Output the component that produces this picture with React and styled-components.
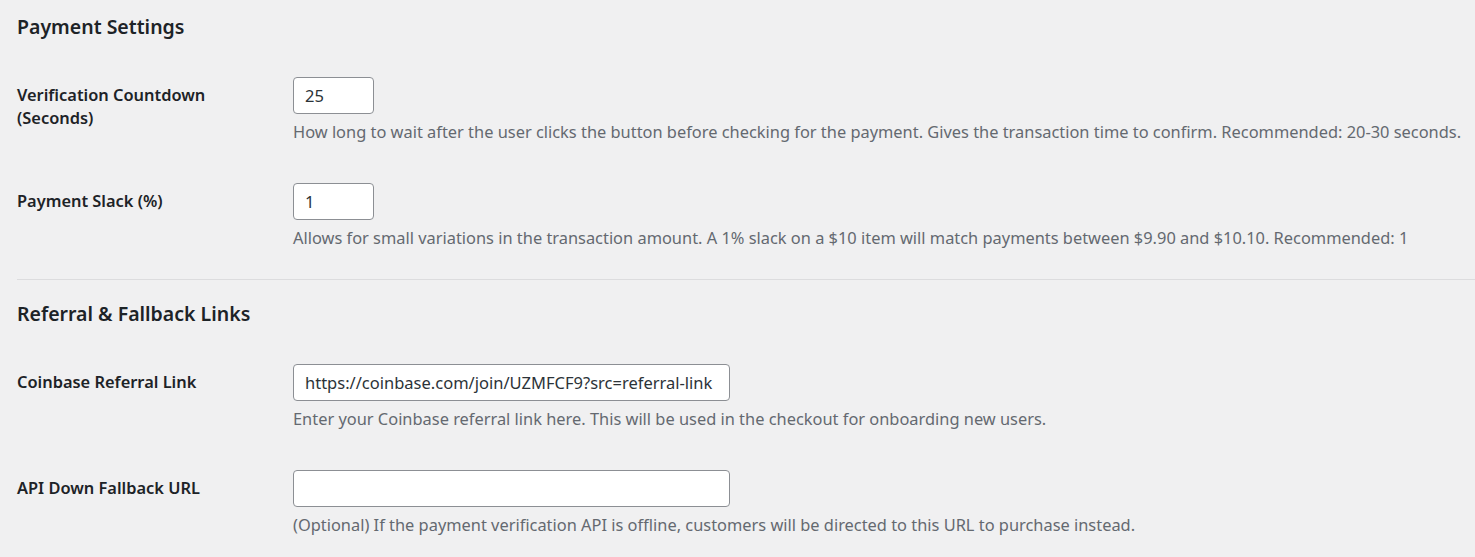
import React from "react";
import styled, { createGlobalStyle } from "styled-components";

const Global = createGlobalStyle`
  html, body { margin: 0; padding: 0; background: #f0f0f1; }
  body { font-family: "Noto Sans", "Open Sans", sans-serif; color: #1d2327; }
`;

const Page = styled.div`
  padding: 0 0 0 17px;
`;

const Section = styled.section`
  display: flex;
  flex-direction: column;
  border-top: ${(p) => (p.$divided ? "1px solid #dcdcde" : "none")};
  padding-top: ${(p) => (p.$divided ? "7px" : "0")};
`;

const Heading = styled.h2`
  margin: 0;
  padding-top: 13px;
  font-size: 19.5px;
  line-height: 28px;
  font-weight: 600;
  color: #1d2327;
`;

const Row = styled.div`
  display: grid;
  grid-template-columns: 276px 1fr;
  margin-top: ${(p) => p.$top}px;
`;

const Label = styled.label`
  padding-top: 6px;
  font-size: 16.4px;
  line-height: 23px;
  font-weight: 600;
  color: #1d2327;
`;

const Field = styled.div`
  display: flex;
  flex-direction: column;
  align-items: flex-start;
`;

const Input = styled.input`
  box-sizing: border-box;
  width: ${(p) => p.$w}px;
  height: 37px;
  margin: 0;
  padding: 0 11px;
  background: #fff;
  border: 1px solid #8c8f94;
  border-radius: 4px;
  font-family: "Noto Sans", "Open Sans", sans-serif;
  font-size: 16.5px;
  color: #2c3338;
  outline: none;
`;

const Desc = styled.p`
  margin: 7px 0 0;
  font-size: 16.4px;
  line-height: 22px;
  color: #646970;
`;

const Bottom = styled.div`
  height: 30px;
`;

export default function App() {
  return (
    <>
      <Global />
      <Page>
        <Section>
          <Heading>Payment Settings</Heading>
          <Row $top={36}>
            <Label>Verification Countdown<br />(Seconds)</Label>
            <Field>
              <Input $w={81} defaultValue="25" />
              <Desc>How long to wait after the user clicks the button before checking for the payment. Gives the transaction time to confirm. Recommended: 20-30 seconds.</Desc>
            </Field>
          </Row>
          <Row $top={40}>
            <Label>Payment Slack (%)</Label>
            <Field>
              <Input $w={81} defaultValue="1" />
              <Desc>Allows for small variations in the transaction amount. A 1% slack on a $10 item will match payments between $9.90 and $10.10. Recommended: 1</Desc>
            </Field>
          </Row>
          <Bottom />
        </Section>
        <Section $divided>
          <Heading>Referral &amp; Fallback Links</Heading>
          <Row $top={36}>
            <Label>Coinbase Referral Link</Label>
            <Field>
              <Input $w={437} defaultValue="https://coinbase.com/join/UZMFCF9?src=referral-link" />
              <Desc>Enter your Coinbase referral link here. This will be used in the checkout for onboarding new users.</Desc>
            </Field>
          </Row>
          <Row $top={40}>
            <Label>API Down Fallback URL</Label>
            <Field>
              <Input $w={437} defaultValue="" />
              <Desc>(Optional) If the payment verification API is offline, customers will be directed to this URL to purchase instead.</Desc>
            </Field>
          </Row>
        </Section>
      </Page>
    </>
  );
}
